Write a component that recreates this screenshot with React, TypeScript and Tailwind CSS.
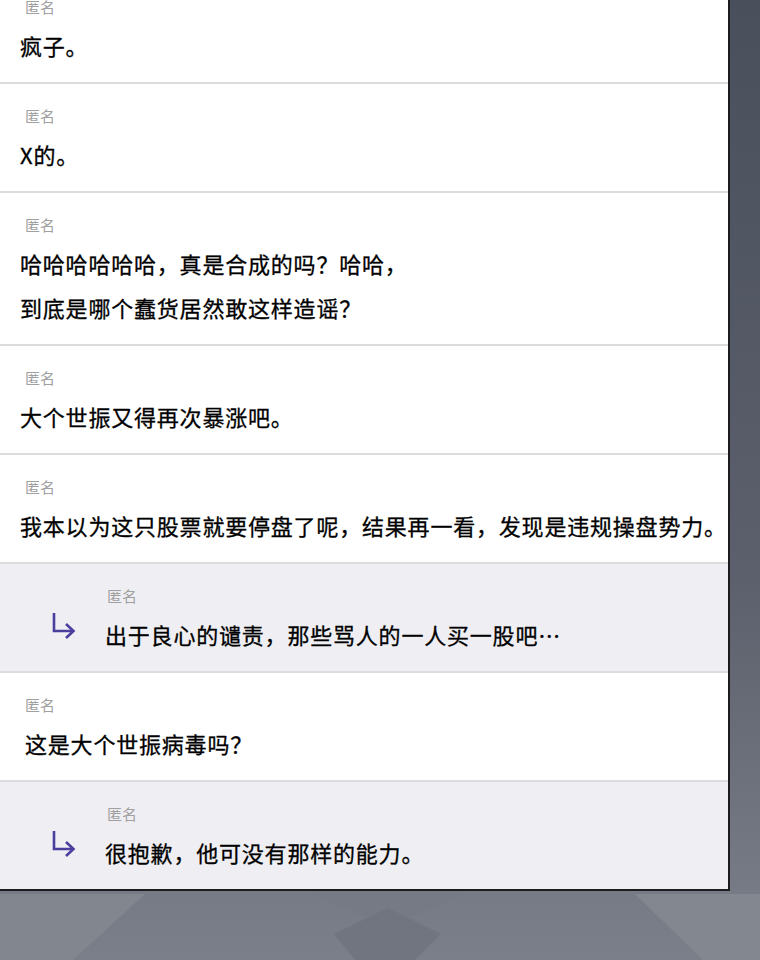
import React from "react";

type Comment = {
  id: number;
  text: string[];
  reply?: boolean;
  indent?: boolean;
};

const comments: Comment[] = [
  { id: 1, text: ["疯子。"] },
  { id: 2, text: ["X的。"] },
  { id: 3, text: ["哈哈哈哈哈哈，真是合成的吗？哈哈，", "到底是哪个蠢货居然敢这样造谣？"] },
  { id: 4, text: ["大个世振又得再次暴涨吧。"] },
  { id: 5, text: ["我本以为这只股票就要停盘了呢，结果再一看，发现是违规操盘势力。"] },
  { id: 6, text: ["出于良心的谴责，那些骂人的一人买一股吧…"], reply: true },
  { id: 7, text: ["这是大个世振病毒吗？"], indent: true },
  { id: 8, text: ["很抱歉，他可没有那样的能力。"], reply: true },
];

const ReplyArrow = () => (
  <svg width="28" height="30" viewBox="0 0 28 30" fill="none" className="shrink-0">
    <path d="M4 2 V20 H23" stroke="#4a3f9f" strokeWidth="2.6" strokeLinejoin="miter" />
    <path d="M16 13 L23.5 20 L16 27" stroke="#4a3f9f" strokeWidth="2.6" strokeLinejoin="miter" />
  </svg>
);

// geometric backdrop behind the panel
const Backdrop = () => (
  <svg className="absolute inset-0" width="760" height="960" viewBox="0 0 760 960">
    <defs>
      <linearGradient id="bg" x1="0" y1="0" x2="0" y2="1">
        <stop offset="0" stopColor="#4a4f5c" />
        <stop offset="0.6" stopColor="#5b606c" />
        <stop offset="0.92" stopColor="#767a84" />
        <stop offset="1" stopColor="#7b7f89" />
      </linearGradient>
    </defs>
    <rect width="760" height="960" fill="url(#bg)" />
    <polygon points="0,894 145,894 73,960 0,960" fill="#82868e" />
    <polygon points="310,894 465,894 388,926" fill="#767a84" />
    <polygon points="334,934 388,908 441,934 415,960 355,960" fill="#71757f" />
    <polygon points="635,894 760,894 760,960 703,960" fill="#83878f" />
  </svg>
);

export default function App() {
  return (
    <div className="relative w-[760px] h-[960px] overflow-hidden" style={{ fontFamily: '"Noto Sans CJK SC", "Noto Sans", sans-serif' }}>
      <Backdrop />
      <div className="relative w-[730px] -mt-[25px] bg-white border-r-2 border-b-2 border-[#1c1c1f]">
        {comments.map((c, i) => (
          <div
            key={c.id}
            className={
              (c.reply ? "bg-[#efeff3] pl-[50px] " : "bg-white pl-[20px] ") +
              (i < comments.length - 1 ? "border-b-2 border-[#dcdcdc] " : "") +
              "flex pt-[22px] pb-[15px]"
            }
          >
            {c.reply && (
              <div className="w-[55px] pt-[25px]">
                <ReplyArrow />
              </div>
            )}
            <div className="flex flex-col">
              <div className={(c.reply ? "pl-[2px] " : "pl-[5px] ") + "text-[15px] leading-5 text-[#a0a0a0]"}>匿名</div>
              <div className={(c.indent ? "pl-[5px] " : "") + "mt-[6px] text-[22px] leading-[44px] tracking-[0.8px] text-black [-webkit-text-stroke:0.3px_#000]"}>
                {c.text.map((t) => (
                  <div key={t}>{t}</div>
                ))}
              </div>
            </div>
          </div>
        ))}
      </div>
    </div>
  );
}
